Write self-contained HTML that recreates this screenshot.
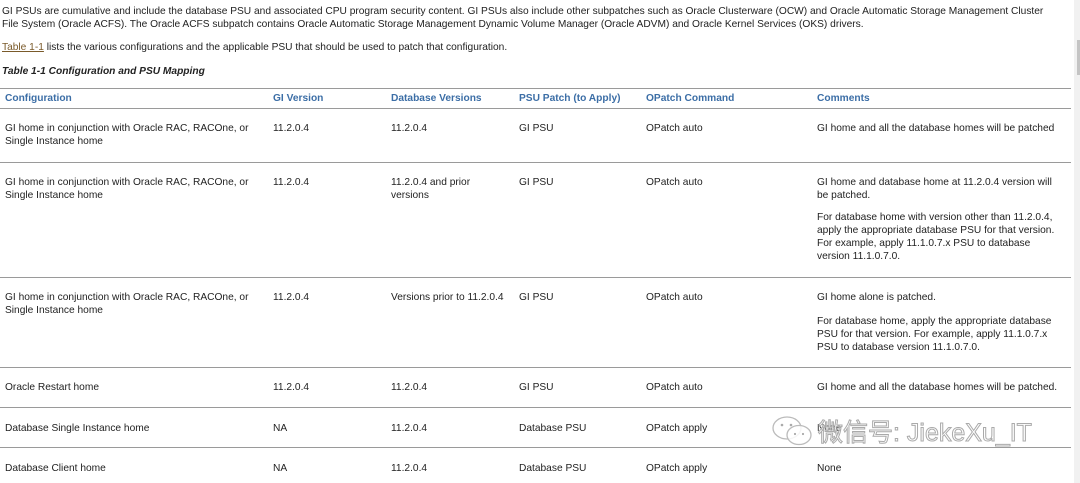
<!DOCTYPE html><html><head><meta charset="utf-8"><style>
body{margin:0;width:1080px;height:483px;background:#fff;position:relative;overflow:hidden;font-family:"Liberation Sans",Arial,sans-serif;font-size:10.2px;color:#222;line-height:13px}
.a{position:absolute;white-space:nowrap}
.h{color:#3c6ea6;font-weight:bold}
.l{position:absolute;left:0;width:1071px;height:1px;background:#9a9a9a}
</style></head><body>
<div class="a" style="left:2px;top:5px">GI PSUs are cumulative and include the database PSU and associated CPU program security content. GI PSUs also include other subpatches such as Oracle Clusterware (OCW) and Oracle Automatic Storage Management Cluster</div>
<div class="a" style="left:2px;top:18px">File System (Oracle ACFS). The Oracle ACFS subpatch contains Oracle Automatic Storage Management Dynamic Volume Manager (Oracle ADVM) and Oracle Kernel Services (OKS) drivers.</div>
<div class="a" style="left:2px;top:41px"><span style="color:#7a5a2a;text-decoration:underline">Table 1-1</span> lists the various configurations and the applicable PSU that should be used to patch that configuration.</div>
<div class="a" style="left:2px;top:65px;font-weight:bold;font-style:italic">Table 1-1 Configuration and PSU Mapping</div>
<div class="l" style="top:88px"></div>
<div class="l" style="top:108px"></div>
<div class="l" style="top:162px"></div>
<div class="l" style="top:277px"></div>
<div class="l" style="top:367px"></div>
<div class="l" style="top:407px"></div>
<div class="l" style="top:447px"></div>
<div class="a h" style="left:5px;top:92px">Configuration</div>
<div class="a h" style="left:273px;top:92px">GI Version</div>
<div class="a h" style="left:391px;top:92px">Database Versions</div>
<div class="a h" style="left:519px;top:92px">PSU Patch (to Apply)</div>
<div class="a h" style="left:646px;top:92px">OPatch Command</div>
<div class="a h" style="left:817px;top:92px">Comments</div>

<div class="a" style="left:5px;top:122px">GI home in conjunction with Oracle RAC, RACOne, or<br>Single Instance home</div>
<div class="a" style="left:273px;top:122px">11.2.0.4</div><div class="a" style="left:391px;top:122px">11.2.0.4</div>
<div class="a" style="left:519px;top:122px">GI PSU</div><div class="a" style="left:646px;top:122px">OPatch auto</div>
<div class="a" style="left:817px;top:122px">GI home and all the database homes will be patched</div>

<div class="a" style="left:5px;top:176px">GI home in conjunction with Oracle RAC, RACOne, or<br>Single Instance home</div>
<div class="a" style="left:273px;top:176px">11.2.0.4</div><div class="a" style="left:391px;top:176px">11.2.0.4 and prior<br>versions</div>
<div class="a" style="left:519px;top:176px">GI PSU</div><div class="a" style="left:646px;top:176px">OPatch auto</div>
<div class="a" style="left:817px;top:176px">GI home and database home at 11.2.0.4 version will<br>be patched.</div>
<div class="a" style="left:817px;top:211px">For database home with version other than 11.2.0.4,<br>apply the appropriate database PSU for that version.<br>For example, apply 11.1.0.7.x PSU to database<br>version 11.1.0.7.0.</div>

<div class="a" style="left:5px;top:291px">GI home in conjunction with Oracle RAC, RACOne, or<br>Single Instance home</div>
<div class="a" style="left:273px;top:291px">11.2.0.4</div><div class="a" style="left:391px;top:291px">Versions prior to 11.2.0.4</div>
<div class="a" style="left:519px;top:291px">GI PSU</div><div class="a" style="left:646px;top:291px">OPatch auto</div>
<div class="a" style="left:817px;top:291px">GI home alone is patched.</div>
<div class="a" style="left:817px;top:315px">For database home, apply the appropriate database<br>PSU for that version. For example, apply 11.1.0.7.x<br>PSU to database version 11.1.0.7.0.</div>

<div class="a" style="left:5px;top:381px">Oracle Restart home</div>
<div class="a" style="left:273px;top:381px">11.2.0.4</div><div class="a" style="left:391px;top:381px">11.2.0.4</div>
<div class="a" style="left:519px;top:381px">GI PSU</div><div class="a" style="left:646px;top:381px">OPatch auto</div>
<div class="a" style="left:817px;top:381px">GI home and all the database homes will be patched.</div>

<div class="a" style="left:5px;top:422px">Database Single Instance home</div>
<div class="a" style="left:273px;top:422px">NA</div><div class="a" style="left:391px;top:422px">11.2.0.4</div>
<div class="a" style="left:519px;top:422px">Database PSU</div><div class="a" style="left:646px;top:422px">OPatch apply</div>
<div class="a" style="left:817px;top:422px">None</div>

<div class="a" style="left:5px;top:462px">Database Client home</div>
<div class="a" style="left:273px;top:462px">NA</div><div class="a" style="left:391px;top:462px">11.2.0.4</div>
<div class="a" style="left:519px;top:462px">Database PSU</div><div class="a" style="left:646px;top:462px">OPatch apply</div>
<div class="a" style="left:817px;top:462px">None</div>

<svg class="a" style="left:769px;top:414px" width="50" height="36" viewBox="0 0 50 36"><g fill="rgba(255,255,255,0.85)" stroke="#bbb" stroke-width="1.3"><ellipse cx="18" cy="14" rx="14" ry="11"/><ellipse cx="30" cy="21" rx="12" ry="9.5"/></g><g fill="#aaa"><circle cx="13" cy="11" r="1.3"/><circle cx="22" cy="11" r="1.3"/><circle cx="26" cy="20" r="1.1"/><circle cx="34" cy="20" r="1.1"/></g></svg>
<div class="a" style="left:818px;top:418px;font-family:'Liberation Sans','Noto Sans CJK SC',sans-serif;font-size:25px;line-height:30px;color:rgba(255,255,255,0.6);-webkit-text-stroke:1px #aaa">微信号: JiekeXu_IT</div>
<div style="position:absolute;left:1074px;top:0;width:6px;height:483px;background:#f1f1f1"></div>
<div style="position:absolute;left:1077px;top:40px;width:3px;height:35px;background:#c4c4c4"></div>
</body></html>
